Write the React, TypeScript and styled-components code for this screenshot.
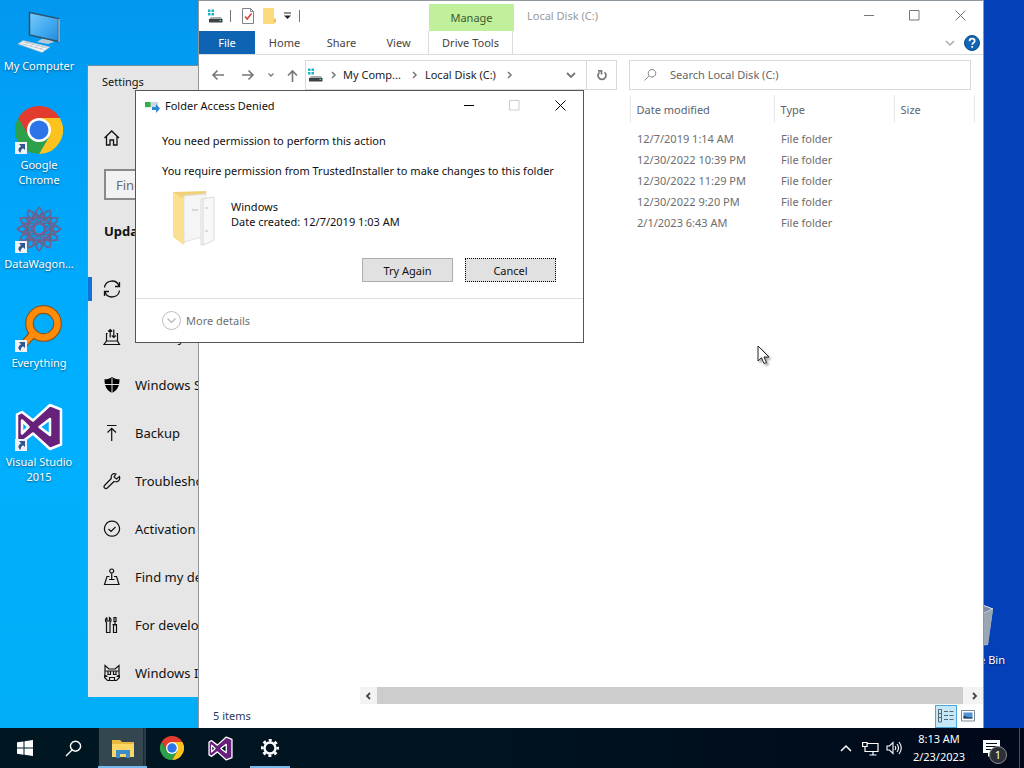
import React from 'react';
import styled, { createGlobalStyle, css } from 'styled-components';

const GlobalStyle = createGlobalStyle`
  *, *::before, *::after { box-sizing: border-box; }
  html, body { margin: 0; height: 100%; }
  body, button, input, table {
    font-family: "Noto Sans", "Open Sans", sans-serif;
    font-size: 11px;
    line-height: 15px;
  }
  button { border: 0; padding: 0; background: none; color: inherit; }
  svg { display: block; flex: none; }
`;

const Screen = styled.div`
  display: grid;
  grid-template-rows: minmax(0, 1fr) 40px;
  height: 100vh;
  overflow: hidden;
`;

const Desktop = styled.main`
  position: relative;
  overflow: hidden;
  background: linear-gradient(90deg, transparent 0 50%, #0440b8 96%),
    linear-gradient(180deg, #0297ee 0, #00a2f8 18%, #00b0ff 55%, #00adf6 100%);
`;

/* Desktop shortcuts */

const ShortcutList = styled.nav`
  display: flex;
  flex-direction: column;
  align-items: flex-start;
  padding-top: 7px;
`;

const Shortcut = styled.a`
  display: flex;
  flex-direction: column;
  align-items: center;
  gap: 3px;
  width: 78px;
  height: 99px;
  color: #fff;
  text-align: center;
  text-decoration: none;
  text-shadow: 0 1px 2px rgba(0, 0, 0, 0.5);
`;

const ShortcutArt = styled.span`
  position: relative;
  width: 48px;
  height: 48px;
`;

const LinkBadge = styled.svg`
  position: absolute;
  left: 0;
  bottom: 0;
`;

const RecycleBin = styled(Shortcut)`
  position: absolute;
  right: 9px;
  bottom: 28px;
`;

/* Windows */

const Frame = styled.section`
  position: absolute;
  display: flex;
  flex-direction: column;
  background: #fff;
`;

const SettingsWindow = styled(Frame)`
  left: 87px;
  top: 65px;
  bottom: 31px;
  width: 420px;
  border: 1px solid #6b8ea3;
  border-width: 1px 0 0 1px;
  background: #e6e6e6;
  color: #111;
  white-space: nowrap;
`;

const SettingsTitle = styled.header`
  padding: 8px 14px;
`;

const HomeLink = styled.a`
  display: flex;
  align-items: center;
  height: 48px;
  padding: 0 15px;
  margin-top: 17px;
  color: inherit;
`;

const FindBox = styled.input`
  width: 280px;
  height: 31px;
  margin: 7px 0 0 16px;
  padding: 0 10px;
  border: 2px solid #8a8a8a;
  background: #f2f2f2;
  font-size: 13px;
  &::placeholder { color: #6a6a6a; opacity: 1; }
`;

const SettingsHeading = styled.h2`
  margin: 21px 0 24px 16px;
  font-size: 13px;
  line-height: 20px;
  font-weight: 700;
`;

const SettingsItem = styled.a<{ $current?: boolean }>`
  display: flex;
  align-items: center;
  gap: 14px;
  height: 48px;
  padding-left: 15px;
  color: inherit;
  font-size: 13px;
  line-height: 20px;
  text-decoration: none;
  ${(p) => p.$current && css`
    background: linear-gradient(#1272d8, #1272d8) 0 50% / 4px 24px no-repeat;
  `}
`;

const ExplorerWindow = styled(Frame)`
  left: 198px;
  top: 0;
  right: 40px;
  bottom: 0;
  border: 1px solid #8f979c;
  border-width: 1px 1px 0 1px;
  color: #4a4a4a;
`;

const TitleRow = styled.header`
  display: flex;
  height: 30px;
`;

const QuickBar = styled.div`
  display: flex;
  align-items: center;
  gap: 7px;
  width: 230px;
  padding-left: 8px;
`;

const Bar = styled.i`
  width: 1px;
  height: 12px;
  background: #777;
`;

const ContextTab = styled.div`
  width: 85px;
  margin-top: 3px;
  padding-top: 6px;
  background: #c0f09a;
  color: #3c5a34;
  text-align: center;
`;

const WindowName = styled.h1`
  flex: 1;
  margin: 0;
  padding: 7px 13px;
  color: #999;
  font-size: 11px;
  line-height: 15px;
  font-weight: 400;
`;

const CaptionButton = styled.button<{ $tone: string }>`
  display: grid;
  place-items: center;
  width: 46px;
  height: 29px;
  color: ${(p) => p.$tone};
`;

const RibbonTabs = styled.nav`
  display: flex;
  align-items: center;
  height: 24px;
  border-bottom: 1px solid #dadbdc;
`;

const RibbonTab = styled.button<{ $kind?: 'file' | 'tool' }>`
  width: 57px;
  height: 23px;
  color: #444;
  ${(p) => p.$kind === 'file' && css`
    width: 56px;
    margin-right: 1px;
    background: #0e63b3;
    color: #fff;
  `}
  ${(p) => p.$kind === 'tool' && css`
    width: 85px;
    margin-left: 1px;
    border: 1px solid #dcdcdc;
    border-width: 0 1px;
  `}
`;

const RibbonTools = styled.div`
  display: flex;
  align-items: center;
  gap: 9px;
  margin-left: auto;
  padding-right: 3px;
  color: #aaa;
`;

const AddressRow = styled.div`
  display: flex;
  align-items: center;
  height: 40px;
  padding: 0 12px;
  color: #222;
`;

const HistoryButtons = styled.div`
  display: flex;
  align-items: center;
  gap: 12px;
  width: 88px;
  margin-right: 6px;
  color: #777;
`;

const Field = styled.div`
  display: flex;
  align-items: center;
  height: 30px;
  border: 1px solid #d9d9d9;
`;

const PathField = styled(Field)`
  flex: none;
  width: 312px;
  padding-left: 1px;
`;

const Crumb = styled.a`
  padding: 0 4px 2px 0;
  color: inherit;
  text-decoration: none;
`;

const CrumbIcon = styled.span`
  display: grid;
  place-items: center;
  width: 20px;
  color: #777;
`;

const PathEnd = styled.button<{ $ruled?: boolean }>`
  display: grid;
  place-items: center;
  width: 30px;
  height: 28px;
  color: #777;
  border-left: ${(p) => (p.$ruled ? '1px solid #d9d9d9' : '0')};
`;

const Spacer = styled.span`
  flex: 1;
`;

const SearchField = styled(Field)`
  flex: 1;
  gap: 13px;
  margin-left: 12px;
  padding-left: 13px;
  color: #888;
`;

const SearchInput = styled.input`
  flex: 1;
  min-width: 0;
  padding: 0 0 2px;
  border: 0;
  outline: 0;
  background: none;
  &::placeholder { color: #666; opacity: 1; }
`;

const FileArea = styled.div`
  flex: 1;
  min-height: 0;
  display: flex;
  flex-direction: column;
  margin-left: 161px;
`;

const FileTable = styled.table`
  width: 100%;
  table-layout: fixed;
  border-collapse: collapse;
  color: #6d6d6d;
  text-align: left;
`;

const Col = styled.col<{ $w?: number }>`
  width: ${(p) => (p.$w ? `${p.$w}px` : 'auto')};
`;

const Head = styled.th`
  height: 28px;
  padding: 1px 6px 0;
  border-right: 1px solid #e8e8e8;
  color: #5a6470;
  font-weight: 400;
  &:last-child { border-right: 0; }
`;

const FileRows = styled.tbody`
  &::before { content: ""; display: table-row; height: 5px; }
`;

const Cell = styled.td`
  height: 21px;
  padding: 0 7px;
`;

const ScrollTrack = styled.div`
  display: flex;
  height: 17px;
  margin-top: auto;
  background: #f3f3f3;
  color: #444;
`;

const ScrollArrow = styled.button`
  display: grid;
  place-items: center;
  width: 17px;
`;

const ScrollThumb = styled.div`
  flex: 1;
  margin-right: 3px;
  background: #cdcdcd;
`;

const StatusBar = styled.footer`
  display: flex;
  align-items: center;
  height: 24px;
  padding: 0 4px 0 14px;
  color: #2e3957;
`;

const StatusText = styled.span`
  flex: 1;
  padding-bottom: 2px;
`;

const ViewButton = styled.button<{ $on?: boolean }>`
  display: grid;
  place-items: center;
  width: 22px;
  height: 23px;
  border: 1px solid ${(p) => (p.$on ? '#4ea6d8' : 'transparent')};
  background: ${(p) => (p.$on ? '#c4e8f8' : 'none')};
`;

const Dialog = styled(Frame)`
  left: 135px;
  top: 90px;
  width: 449px;
  border: 1px solid #555;
  color: #111;
`;

const DialogTitle = styled.header`
  display: flex;
  align-items: center;
  height: 29px;
  padding-left: 9px;
`;

const DialogName = styled.h2`
  flex: 1;
  margin: 0 0 0 5px;
  font-size: 11px;
  line-height: 15px;
  font-weight: 400;
`;

const DialogBody = styled.div`
  display: flex;
  flex-direction: column;
  padding: 13px 26px 0;
`;

const Line = styled.p`
  margin: 0 0 15px;
  white-space: nowrap;
`;

const FolderInfo = styled.div`
  display: flex;
  align-items: center;
  gap: 16px;
  height: 60px;
  margin-top: -6px;
  padding-left: 5px;
`;

const FolderText = styled.p`
  margin: 0;
  padding-bottom: 6px;
`;

const Actions = styled.div`
  display: flex;
  justify-content: flex-end;
  gap: 12px;
  padding: 11px 1px 16px 0;
`;

const PushButton = styled.button<{ $focused?: boolean }>`
  width: 91px;
  height: 24px;
  border: 1px ${(p) => (p.$focused ? 'dotted #000' : 'solid #adadad')};
  background: #e1e1e1;
  color: #111;
`;

const DetailsBar = styled.footer`
  height: 44px;
  padding: 0 26px;
  border-top: 1px solid #dfdfdf;
`;

const DetailsButton = styled.button`
  display: flex;
  align-items: center;
  gap: 5px;
  height: 43px;
  color: #707070;
`;

const Pointer = styled.svg`
  position: absolute;
  left: 757px;
  top: 345px;
  filter: drop-shadow(2px 2px 1px rgba(0, 0, 0, 0.35));
`;

/* Taskbar */

const Taskbar = styled.footer`
  display: flex;
  background: linear-gradient(90deg, #001722 0, #001420 45%, #00081a 100%);
  color: #fff;
`;

const TaskButton = styled.button<{ $active?: boolean; $open?: boolean }>`
  display: grid;
  place-items: center;
  width: 49px;
  height: 40px;
  ${(p) => p.$active && css`
    background:
      linear-gradient(#76b9ed, #76b9ed) 0 100% / 100% 2px no-repeat,
      linear-gradient(90deg, transparent 1px, #34464f 1px 45px, #1b2b34 45px 46px, #2a3b44 46px 48px, transparent 48px);
  `}
  ${(p) => p.$open && css`
    background: linear-gradient(#76b9ed, #76b9ed) 50% 100% / 40px 2px no-repeat;
  `}
`;

const Tray = styled.div`
  display: flex;
  align-items: center;
  margin-left: auto;
`;

const TrayButton = styled.button`
  display: grid;
  place-items: center;
  width: 24px;
  height: 40px;
`;

const Clock = styled.time`
  width: 66px;
  line-height: 18px;
  text-align: center;
`;

const NoticeButton = styled(TrayButton)`
  position: relative;
  width: 48px;
  margin-right: 4px;
  padding-right: 9px;
  border-right: 1px solid #44505c;
`;

const NoticeCount = styled.span`
  position: absolute;
  left: 17px;
  top: 18px;
  width: 18px;
  height: 18px;
  border: 1px solid #8b9096;
  border-radius: 50%;
  background: #2c3036;
  line-height: 16px;
`;

/* Artwork */

const Badge = () => (
  <LinkBadge width="12" height="12" viewBox="0 0 12 12" aria-hidden="true">
    <rect width="12" height="12" fill="#eef1f5" />
    <path d="M4 2h6v6L8 6.2C6 7.4 5.600 8.800 5.800 10.700 3 9.500 2.400 6.500 6 4.200z" fill="#31558e" />
  </LinkBadge>
);

const ComputerArt = () => (
  <svg width="48" height="48" viewBox="0 0 48 48">
    <defs>
      <linearGradient id="monitor" x2="1" y2="1">
        <stop offset="0" stopColor="#7ecbf8" /><stop offset=".5" stopColor="#45aef2" /><stop offset="1" stopColor="#248bdc" />
      </linearGradient>
    </defs>
    <path d="M28 31l7-1 1 3 3 2-6 2-11-2 3-2z" fill="#b4cad8" />
    <path d="M14.500 5.500l29 6v23l-29-6.500z" fill="url(#monitor)" stroke="#2b546e" strokeWidth="1.500" />
    <path d="M44 12v23" stroke="#c5dbe7" strokeWidth="1" />
    <path d="M3 37l5-3.500 27 6.500-8 5.500z" fill="#eef3f6" stroke="#aab7bf" strokeWidth=".6" />
    <path d="M5.500 36.500l23 6M8 34.800l24 6M10 38l4-3M15 39.500l4-3M20 41l4-3M25 42.500l4-3" stroke="#a7b6c0" strokeWidth=".6" />
  </svg>
);

const ChromeArt = ({ size }: { size: number }) => (
  <svg width={size} height={size} viewBox="0 0 48 48">
    <path d="M24 12h20.800A24 24 0 0 1 24 48L34.400 30z" fill="#fcc31e" />
    <path d="M13.600 30L3.200 12A24 24 0 0 1 44.800 12H24z" fill="#e33b2e" />
    <path d="M34.400 30L24 48A24 24 0 0 1 3.200 12L13.600 30z" fill="#2da04a" />
    <circle cx="24" cy="24" r="12" fill="#fff" />
    <circle cx="24" cy="24" r="9.500" fill="#2c74e8" />
  </svg>
);

const WagonArt = () => (
  <svg width="48" height="48" viewBox="0 0 48 48" fill="none" stroke="#5f6796" strokeWidth="1.100">
    {[0, 30, 60, 90, 120, 150].map((a) => (
      <g key={a} transform={`rotate(${a} 24 24)`}>
        <ellipse cx="24" cy="24" rx="21" ry="6" />
        <rect x="13" y="13" width="22" height="22" />
        <path d="M24 2l3 5-3 5-3-5zM24 36l3 5-3 5-3-5z" stroke="#80587f" />
      </g>
    ))}
    <circle cx="24" cy="24" r="5" stroke="#a84a74" />
    <circle cx="24" cy="24" r="13" stroke="#94557c" strokeDasharray="2 2" />
  </svg>
);

const EverythingArt = () => (
  <svg width="48" height="48" viewBox="0 0 48 48" fill="none">
    <path d="M19 29L6 43" stroke="#8d4c08" strokeWidth="8" />
    <circle cx="28.500" cy="19.500" r="14" stroke="#8d4c08" strokeWidth="8.500" />
    <path d="M20 28L7 42" stroke="#ff8b0a" strokeWidth="6" />
    <circle cx="28.500" cy="19.500" r="14" stroke="#ff8b0a" strokeWidth="6.500" />
  </svg>
);

const StudioArt = ({ size }: { size: number }) => (
  <svg width={size} height={size} viewBox="0 0 48 48">
    <path fillRule="evenodd" strokeLinejoin="round" stroke="#fff" strokeWidth="2.500" fill="#68217a"
      d="M35 2l11 4.500v35L35 46 18 30.500 7 39l-5-2.500v-25L7 9l11 8.500zM35 16l-10.500 8L35 32zM7 17.500v13l6.500-6.500z" />
  </svg>
);

const BinArt = () => (
  <svg width="48" height="48" viewBox="0 0 48 48">
    <path d="M5 8h36l-5 36-26 2z" fill="#aeb9c5" />
    <path d="M5 8l23-5 13 5-9 4z" fill="#7b8da5" stroke="#e8edf2" />
    <path d="M32 12l9-4-5 35-6 1z" fill="#9aa7b2" />
  </svg>
);

const DriveIcon = () => (
  <svg width="16" height="16" viewBox="0 0 16 16">
    <path d="M1 1.500h2.500v2.500H1zM4.500 1.500H7V4H4.500zM1 5h2.500v2.500H1zM4.500 5H7v2.500H4.500z" fill="#1bb3c9" />
    <path d="M4 9h10l1.500 2.500H2z" fill="#a9adb0" />
    <path d="M2 11h13.500v3.500H2z" fill="#3b4248" />
    <path d="M12.500 12h1.500v1h-1.500z" fill="#7fe07f" />
  </svg>
);

const CheckPage = () => (
  <svg width="17" height="16" viewBox="-3 0 17 16" fill="none">
    <path d="M1.500.5h8l3 3v12h-11z" fill="#fff" stroke="#808488" />
    <path d="M9.500.5v3h3" stroke="#808488" />
    <path d="M4 8.500l2.200 2.500 4.300-5.500" stroke="#d8432f" strokeWidth="1.500" />
  </svg>
);

const SmallFolder = () => (
  <svg width="14" height="16" viewBox="0 0 14 16">
    <path d="M1 0h11v11h2v3l-2 2H1z" fill="#fbdb7c" />
    <path d="M11.500 10.500H14V14h-2.500z" fill="#ecc558" />
  </svg>
);

const OpenFolder = () => (
  <svg width="48" height="60" viewBox="0 0 48 60">
    <path d="M6 5l33-1v8L17 57 6 46z" fill="#f0d17a" />
    <path d="M17 9l22-2v42l-22 6z" fill="#f5f5f5" stroke="#e2e2e2" />
    <path d="M34 12l13-2v43l-8 4-5 1z" fill="#f8f8f8" stroke="#dcdcdc" />
    <path d="M36 12v46" stroke="#d8d8d8" />
    <path d="M6 5l11 7v46L6 50z" fill="#fbe08f" />
    <path d="M25 23h6M38 21h3M38 44h3" stroke="#b8bec4" />
  </svg>
);

const CopyIcon = () => (
  <svg width="15" height="14" viewBox="0 0 15 14">
    <path d="M0 3h13v5.500H0z" fill="#cdd7dc" />
    <path d="M0 3h5.500v5H0z" fill="#2fae4b" />
    <path d="M7 8h4V5l4 4.500-4 4.500v-3H7z" fill="#2f86cf" />
  </svg>
);

type GlyphProps = { d: string; w?: number; h?: number; sw?: number };

const Glyph = ({ d, w = 16, h = 16, sw = 1 }: GlyphProps) => (
  <svg width={w} height={h} viewBox={`0 0 ${w} ${h}`} fill="none" stroke="currentColor" strokeWidth={sw} aria-hidden="true">
    <path d={d} />
  </svg>
);

const CHEVRON_DOWN = 'M1 2l4 4 4-4';
const CHEVRON_RIGHT = 'M2 2l3 3-3 3';
const SHIELD = 'M8 0c2 1.600 4.500 2.300 7.500 2.300 0 6-1.500 10.700-7.500 13.700C2 13 .5 8.300.5 2.300 3.500 2.300 6 1.600 8 0z';

const settingsItems: { label: string; icon: React.ReactNode }[] = [
  { label: 'Windows Update', icon: <Glyph w={18} h={18} sw={1.3} d="M1.500 7.500A7.500 7.500 0 0 1 16 6M16.500 2v4.500H12M16.500 10.500A7.500 7.500 0 0 1 2 12M1.500 16v-4.500H6" /> },
  { label: 'Delivery Optimization', icon: <Glyph w={18} h={18} sw={1.2} d="M4.500 5.500H3.500v7.500L1 16.500h15.500L14.500 13V5.500h-1M3.500 13h11M7.200 1.500v8M5.200 3.500l2-2 2 2M10.800 1.500v8M8.800 7.500l2 2 2-2" /> },
  { label: 'Windows Security', icon: (
    <svg width="18" height="18" viewBox="-1 -1 18 18" aria-hidden="true"><path d={SHIELD} fill="#000" /><path d="M8 1v15M0 7.500h16" stroke="#e6e6e6" /></svg>
  ) },
  { label: 'Backup', icon: <Glyph w={18} h={18} sw={1.2} d="M4 1.500h9.500M8.700 17V4.500M4.500 8.500l4.200-4.200L13 8.500" /> },
  { label: 'Troubleshoot', icon: <Glyph w={18} h={18} sw={1.2} d="M16.500 4.500l-3 2.500-2.500-2L13 2C10 .5 7.500 3 8.300 6.500L1.500 13.500c-1.500 2 1 4 2.800 2.500l6.700-6.500c4 1 6.500-1.500 5.500-5z" /> },
  { label: 'Activation', icon: <Glyph w={18} h={18} sw={1.2} d="M9 1.200a7.500 7.500 0 1 0 .01 0M5.500 9l2.500 2.500L12.500 7" /> },
  { label: 'Find my device', icon: <Glyph w={18} h={18} sw={1.2} d="M8.700 1a2 2 0 1 0 .01 0M8.700 5v6.500M6.500 8.500H4L1.500 16.500H16L13.500 8.500H11M6 11.500h5.500" /> },
  { label: 'For developers', icon: <Glyph w={18} h={18} sw={1.2} d="M4 1.500v3.500h2.500V1.500c2 1 2 4 .5 5v10H3.500v-10C2 5.500 2 2.500 4 1.500M11 1.500h2v4h-2zM12 5.500V9M9.500 8.500h4.500M10.500 9h3v7.500h-3z" /> },
  { label: 'Windows Insider Program', icon: <Glyph w={18} h={18} sw={1.2} d="M2 1.500L6 5h6l4-3.500v8l.5 4-3 3h-9l-3-3 .5-4zM2 7h14M5 7v3.500h2.500V7M10.500 7v3.500H13V7M6.500 16v-2.500h5V16M1.500 11l3 1.500M16.500 11l-3 1.500" /> },
];

const files = [
  '12/7/2019 1:14 AM',
  '12/30/2022 10:39 PM',
  '12/30/2022 11:29 PM',
  '12/30/2022 9:20 PM',
  '2/1/2023 6:43 AM',
];

const Caption = ({ tone, maxTone = tone }: { tone: string; maxTone?: string }) => (
  <>
    <CaptionButton $tone={tone} aria-label="Minimize"><Glyph w={11} h={11} d="M1 5.500h10" /></CaptionButton>
    <CaptionButton $tone={maxTone} aria-label="Maximize"><Glyph w={11} h={11} d="M.5.500h9.500v9.500H.5z" /></CaptionButton>
    <CaptionButton $tone={tone} aria-label="Close"><Glyph w={11} h={11} d="M.5.500l10 10M10.500.5l-10 10" /></CaptionButton>
  </>
);

const shortcuts = [
  { label: 'My Computer', art: <ComputerArt />, link: false },
  { label: 'Google Chrome', art: <ChromeArt size={48} />, link: true },
  { label: 'DataWagon...', art: <WagonArt />, link: true },
  { label: 'Everything', art: <EverythingArt />, link: true },
  { label: 'Visual Studio 2015', art: <StudioArt size={48} />, link: true },
];

export default function App() {
  return (
    <Screen>
      <GlobalStyle />
      <Desktop>
        <ShortcutList>
          {shortcuts.map((s) => (
            <Shortcut key={s.label} href="#">
              <ShortcutArt>{s.art}{s.link && <Badge />}</ShortcutArt>
              {s.label}
            </Shortcut>
          ))}
        </ShortcutList>
        <RecycleBin href="#">
          <ShortcutArt><BinArt /></ShortcutArt>
          Recycle Bin
        </RecycleBin>

        <SettingsWindow aria-label="Settings">
          <SettingsTitle>Settings</SettingsTitle>
          <HomeLink href="#" aria-label="Home">
            <Glyph w={18} h={18} sw={1.3} d="M1.500 9L8.700 2 16 9M3.500 7.500v8.500h3.500v-5h3.500v5H14V7.500" />
          </HomeLink>
          <FindBox aria-label="Find a setting" placeholder="Find a setting" />
          <SettingsHeading>Update &amp; Security</SettingsHeading>
          {settingsItems.map((item, i) => (
            <SettingsItem key={item.label} href="#" $current={i === 0}>{item.icon}{item.label}</SettingsItem>
          ))}
        </SettingsWindow>

        <ExplorerWindow aria-label="Local Disk (C:)">
          <TitleRow>
            <QuickBar>
              <DriveIcon /><Bar /><CheckPage /><SmallFolder />
              <svg width="9" height="8" viewBox="0 0 9 8"><path d="M1 1h7" stroke="#222" /><path d="M1 3.500h7L4.500 7z" fill="#222" /></svg>
              <Bar />
            </QuickBar>
            <ContextTab>Manage</ContextTab>
            <WindowName>Local Disk (C:)</WindowName>
            <Caption tone="#777" />
          </TitleRow>
          <RibbonTabs>
            <RibbonTab $kind="file">File</RibbonTab>
            <RibbonTab>Home</RibbonTab>
            <RibbonTab>Share</RibbonTab>
            <RibbonTab>View</RibbonTab>
            <RibbonTab $kind="tool">Drive Tools</RibbonTab>
            <RibbonTools>
              <Glyph w={10} h={8} sw={1.5} d={CHEVRON_DOWN} />
              <svg width="16" height="16" viewBox="0 0 16 16" role="img" aria-label="Help">
                <circle cx="8" cy="8" r="7.500" fill="#1165b5" stroke="#0a4d8f" />
                <path d="M5.500 6.200c0-3.400 5.200-3.200 5.200-.2 0 1.800-2.500 1.800-2.500 3.800M8.200 11v1.800" fill="none" stroke="#fff" strokeWidth="1.700" />
              </svg>
            </RibbonTools>
          </RibbonTabs>
          <AddressRow>
            <HistoryButtons>
              <Glyph w={16} h={12} sw={1.6} d="M13 6H2M6.500 1.500L2 6l4.500 4.500" />
              <Glyph w={16} h={12} sw={1.6} d="M3 6h11M9.500 1.500L14 6l-4.500 4.500" />
              <Glyph w={8} h={6} sw={1.3} d="M1.500 1.500L4 4l2.500-2.500" />
              <Glyph w={12} h={14} sw={1.6} d="M5.500 14V3M1 7.500L5.500 3 10 7.500" />
            </HistoryButtons>
            <PathField>
              <DriveIcon />
              <CrumbIcon><Glyph w={7} h={10} sw={1.5} d={CHEVRON_RIGHT} /></CrumbIcon>
              <Crumb href="#">My Comp...</Crumb>
              <CrumbIcon><Glyph w={7} h={10} sw={1.5} d={CHEVRON_RIGHT} /></CrumbIcon>
              <Crumb href="#">Local Disk (C:)</Crumb>
              <CrumbIcon><Glyph w={7} h={10} sw={1.5} d={CHEVRON_RIGHT} /></CrumbIcon>
              <Spacer />
              <PathEnd aria-label="Previous locations"><Glyph w={10} h={8} sw={1.8} d={CHEVRON_DOWN} /></PathEnd>
              <PathEnd $ruled aria-label="Refresh"><Glyph w={12} h={12} sw={1.7} d="M8.500 3.300A4 4 0 1 1 3.500 3.300M2 1.800h3.500V5.500" /></PathEnd>
            </PathField>
            <SearchField as="label">
              <Glyph w={14} h={14} d="M9 1.500a3.800 3.800 0 1 0 .01 0M6 8L1.500 12.500" />
              <SearchInput aria-label="Search" placeholder="Search Local Disk (C:)" />
            </SearchField>
          </AddressRow>
          <FileArea>
            <FileTable>
              <colgroup>
                <Col $w={270} /><Col $w={144} /><Col $w={120} /><Col $w={80} /><Col />
              </colgroup>
              <thead>
                <tr><Head /><Head>Date modified</Head><Head>Type</Head><Head>Size</Head><Head /></tr>
              </thead>
              <FileRows>
                {files.map((date) => (
                  <tr key={date}><Cell /><Cell>{date}</Cell><Cell>File folder</Cell><Cell /><Cell /></tr>
                ))}
              </FileRows>
            </FileTable>
            <ScrollTrack>
              <ScrollArrow aria-label="Scroll left"><Glyph w={7} h={10} sw={1.8} d="M5 2L2 5l3 3" /></ScrollArrow>
              <ScrollThumb />
              <ScrollArrow aria-label="Scroll right"><Glyph w={7} h={10} sw={1.8} d={CHEVRON_RIGHT} /></ScrollArrow>
            </ScrollTrack>
          </FileArea>
          <StatusBar>
            <StatusText>5 items</StatusText>
            <ViewButton $on aria-label="Details view">
              <svg width="16" height="14" viewBox="0 0 16 14" fill="none" stroke="#5b6770">
                <path d="M.5.500h3v12.500h-3zM.5 4.500h3M.5 8.500h3" />
                <path d="M6 2.500h4M11.500 2.500h4M6 6.500h4M11.500 6.500h4M6 10.500h4M11.500 10.500h4" />
              </svg>
            </ViewButton>
            <ViewButton aria-label="Large icons view">
              <svg width="14" height="12" viewBox="0 0 14 12">
                <path d="M.5.500h13v10.500H.5z" fill="#fff" stroke="#7b8894" />
                <path d="M2.500 2.500h9v6h-9z" fill="#4f93d2" /><path d="M2.500 5.500l4 1.500 5 .5v1h-9z" fill="#24425f" />
              </svg>
            </ViewButton>
          </StatusBar>
        </ExplorerWindow>

        <Dialog role="dialog" aria-label="Folder Access Denied">
          <DialogTitle>
            <CopyIcon />
            <DialogName>Folder Access Denied</DialogName>
            <Caption tone="#000" maxTone="#ccc" />
          </DialogTitle>
          <DialogBody>
            <Line>You need permission to perform this action</Line>
            <Line>You require permission from TrustedInstaller to make changes to this folder</Line>
            <FolderInfo>
              <OpenFolder />
              <FolderText>Windows<br />Date created: 12/7/2019 1:03 AM</FolderText>
            </FolderInfo>
            <Actions>
              <PushButton>Try Again</PushButton>
              <PushButton $focused>Cancel</PushButton>
            </Actions>
          </DialogBody>
          <DetailsBar>
            <DetailsButton>
              <svg width="19" height="19" viewBox="0 0 19 19" fill="none" stroke="#bdbdbd">
                <circle cx="9.500" cy="9.500" r="9" /><path d="M5.500 7.500l4 4 4-4" strokeWidth="1.500" />
              </svg>
              More details
            </DetailsButton>
          </DetailsBar>
        </Dialog>

        <Pointer width="14" height="20" viewBox="0 0 14 20">
          <path d="M1 1v15l3.500-3.300L7 18.500l2.500-1L7 12h5z" fill="#fff" stroke="#222" />
        </Pointer>
      </Desktop>

      <Taskbar>
        <TaskButton aria-label="Start">
          <svg width="16" height="16" viewBox="0 0 16 16" fill="#fff"><path d="M0 2.300L6.500 1.400v6.200H0zM7.500 1.200L16 0v7.600H7.500zM0 8.500h6.500v6.200L0 13.800zM7.500 8.500H16V16l-8.500-1.200z" /></svg>
        </TaskButton>
        <TaskButton aria-label="Search"><Glyph w={17} h={17} sw={1.4} d="M10.500 1.200a5 5 0 1 0 .01 0M7 10L1 16" /></TaskButton>
        <TaskButton $active aria-label="File Explorer">
          <svg width="22" height="19" viewBox="0 0 22 19">
            <path d="M0 1h8l2 2h12v15H0z" fill="#e9b93f" />
            <path d="M0 5h22v13H0z" fill="#fcd667" />
            <path d="M4 19v-8h14v8h-4v-4H8v4z" fill="#3b8cc9" />
          </svg>
        </TaskButton>
        <TaskButton aria-label="Google Chrome"><ChromeArt size={24} /></TaskButton>
        <TaskButton aria-label="Visual Studio"><StudioArt size={25} /></TaskButton>
        <TaskButton $open aria-label="Settings">
          <svg width="20" height="20" viewBox="0 0 20 20" fill="none" stroke="#fff">
            <circle cx="10" cy="10" r="5.500" strokeWidth="2.400" />
            <circle cx="10" cy="10" r="7.700" strokeWidth="2.600" strokeDasharray="3 3.050" strokeDashoffset="1.500" />
          </svg>
        </TaskButton>
        <Tray>
          <TrayButton aria-label="Show hidden icons"><Glyph w={12} h={8} sw={1.5} d="M1 7l5-5 5 5" /></TrayButton>
          <TrayButton aria-label="Network"><Glyph w={17} h={15} sw={1.2} d="M5.500 2.500h10.500v8H6M3 5.500v5h3M11 10.500V14M7.500 14h7M.6 1.500h4.500v4H.6z" /></TrayButton>
          <TrayButton aria-label="Volume"><Glyph w={16} h={14} sw={1.1} d="M1 5h2.500L7 1.500v11L3.500 9H1zM9 5q1.500 2 0 4M11 3q3 4 0 8M13 1q4.500 6 0 12" /></TrayButton>
          <Clock>8:13 AM<br />2/23/2023</Clock>
          <NoticeButton aria-label="Notifications, 1 new">
            <svg width="17" height="17" viewBox="0 0 17 17"><path d="M0 0h17v13H9l-4 4v-4H0z" fill="#fff" /><path d="M3 3.500h11M3 6.500h11M3 9.500h7" stroke="#001018" /></svg>
            <NoticeCount>1</NoticeCount>
          </NoticeButton>
        </Tray>
      </Taskbar>
    </Screen>
  );
}
